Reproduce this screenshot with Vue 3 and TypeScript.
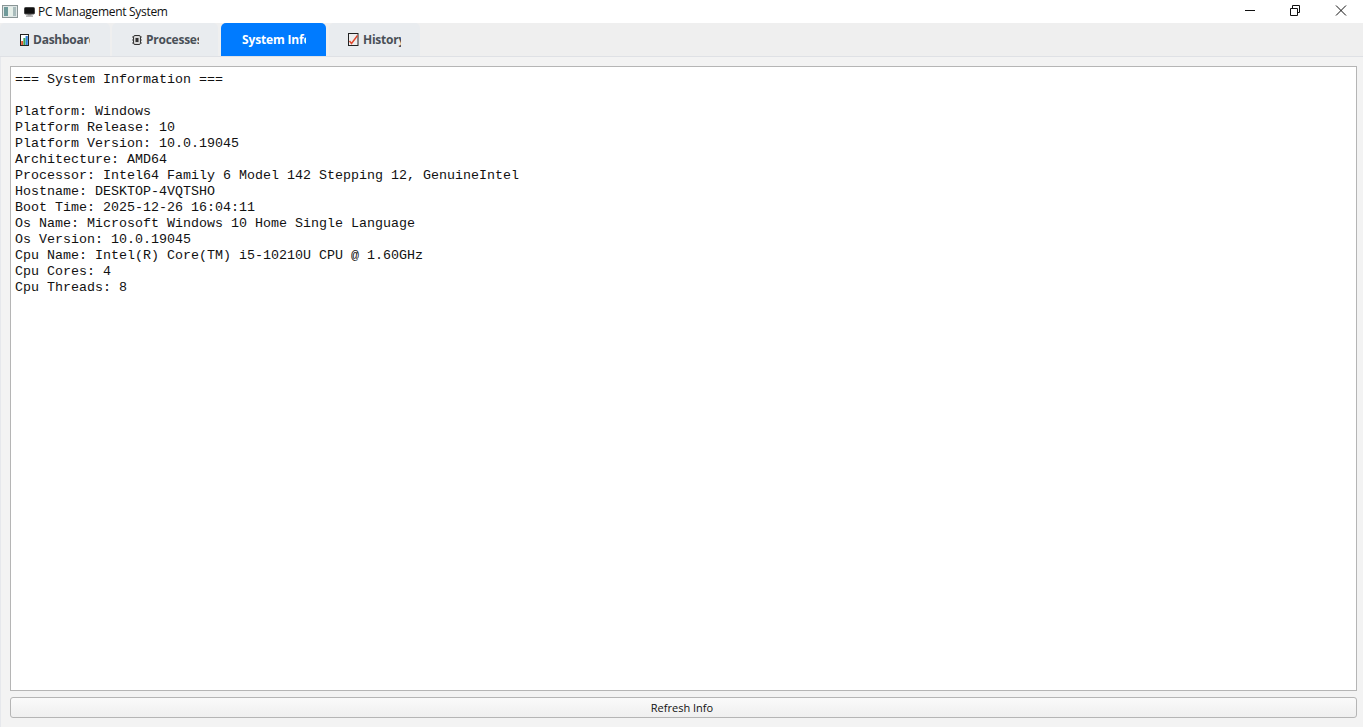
<script setup lang="ts">
const lines: string[] = [
  '=== System Information ===',
  '',
  'Platform: Windows',
  'Platform Release: 10',
  'Platform Version: 10.0.19045',
  'Architecture: AMD64',
  'Processor: Intel64 Family 6 Model 142 Stepping 12, GenuineIntel',
  'Hostname: DESKTOP-4VQTSHO',
  'Boot Time: 2025-12-26 16:04:11',
  'Os Name: Microsoft Windows 10 Home Single Language',
  'Os Version: 10.0.19045',
  'Cpu Name: Intel(R) Core(TM) i5-10210U CPU @ 1.60GHz',
  'Cpu Cores: 4',
  'Cpu Threads: 8',
]
const info = lines.join('\n')
</script>

<template>
  <div class="window">
    <header class="titlebar">
      <svg class="app-icon" width="16" height="14" viewBox="0 0 16 14">
        <rect x="0.5" y="0.5" width="15" height="12" fill="#dfe6e6" stroke="#8a9696" />
        <rect x="2" y="2" width="4" height="9" fill="#6f9a9a" />
        <rect x="6" y="2" width="5" height="9" fill="#e6efe9" />
        <rect x="11" y="2" width="3" height="9" fill="#a9bcbc" />
      </svg>
      <svg class="pc-icon" width="11" height="10" viewBox="0 0 11 10">
        <rect x="0.5" y="0.5" width="10" height="6.5" rx="1" fill="#111" stroke="#444" />
        <rect x="3.5" y="7" width="4" height="1.5" fill="#777" />
        <rect x="2" y="8.5" width="7" height="1.2" fill="#999" />
      </svg>
      <span class="title">PC Management System</span>
      <div class="controls">
        <svg class="ctl" width="46" height="23" viewBox="0 0 46 23">
          <path d="M20 10.5h10" stroke="#111" stroke-width="1" />
        </svg>
        <svg class="ctl" width="46" height="23" viewBox="0 0 46 23">
          <path d="M19.5 8.5h7v7h-7zM21.5 8.5v-3h7v7h-2" fill="none" stroke="#111" stroke-width="1" />
        </svg>
        <svg class="ctl" width="46" height="23" viewBox="0 0 46 23">
          <path d="M19 5.5l10 10M29 5.5l-10 10" stroke="#111" stroke-width="1" />
        </svg>
      </div>
    </header>

    <nav class="tabs">
      <div class="tab tab-dash">
        <svg width="9" height="12" viewBox="0 0 9 12">
          <rect x="0.5" y="0.5" width="8" height="11" fill="#fff" stroke="#222" />
          <rect x="1.2" y="7" width="2" height="4" fill="#e0522c" />
          <rect x="3.4" y="4" width="2" height="7" fill="#3aa655" />
          <rect x="5.6" y="2" width="2.2" height="9" fill="#2f7fd6" />
        </svg>
        <span class="label label-dash">Dashboard</span>
      </div>
      <div class="tab tab-proc">
        <svg width="10" height="12" viewBox="0 0 10 12">
          <rect x="1.5" y="1.5" width="7" height="9" rx="1.5" fill="#d8d8d8" stroke="#333" />
          <rect x="3.5" y="4" width="3" height="4" fill="#333" />
          <path d="M0 3h1.5M0 6h1.5M0 9h1.5M8.5 3h1.5M8.5 6h1.5M8.5 9h1.5" stroke="#555" stroke-width="1" />
        </svg>
        <span class="label label-proc">Processes</span>
      </div>
      <div class="tab tab-sys active">
        <span class="label label-sys">System Info</span>
      </div>
      <div class="tab tab-hist">
        <svg width="11" height="13" viewBox="0 0 11 13">
          <rect x="0.5" y="0.5" width="9.5" height="12" fill="#eeeeee" stroke="#222" />
          <path d="M1.5 8l2 2.5L9.5 2.5" stroke="#e0482c" stroke-width="1.4" fill="none" />
        </svg>
        <span class="label label-hist">History</span>
      </div>
    </nav>

    <main class="content">
      <pre class="output">{{ info }}</pre>
      <button class="refresh" type="button">Refresh Info</button>
    </main>
  </div>
</template>

<style>
html, body { margin: 0; background: #f3f3f3; overflow: hidden; }
</style>

<style scoped>
.window {
  width: 1363px;
  height: 727px;
  display: flex;
  flex-direction: column;
  background: #f3f3f3;
  box-sizing: border-box;
  font-family: "Open Sans", "Liberation Sans", sans-serif;
}
.titlebar {
  height: 23px;
  flex: none;
  background: #fff;
  display: flex;
  align-items: center;
  padding-left: 2px;
}
.app-icon { margin-right: 6px; }
.pc-icon { margin-right: 3px; margin-top: 1px; }
.title {
  font-size: 12px;
  color: #111;
  letter-spacing: -0.3px;
}
.controls { margin-left: auto; display: flex; }
.ctl { display: block; }
.tabs {
  height: 33px;
  flex: none;
  background: #efefef;
  display: flex;
  align-items: stretch;
  border-bottom: 1px solid #dfe1e5;
}
.tab {
  display: flex;
  align-items: center;
  gap: 4px;
  background: #e9ecef;
  border-radius: 5px 5px 0 0;
  box-sizing: border-box;
  overflow: hidden;
  color: #495057;
}
.tab-dash { width: 110px; padding-left: 20px; }
.tab-proc { width: 106px; margin-left: 2px; padding-left: 20px; }
.tab-sys { width: 105px; margin-left: 3px; padding-left: 21px; }
.tab-hist { width: 91px; margin-left: 3px; padding-left: 19px; }
.tab svg { flex: none; }
.active { background: #007bff; color: #fff; }
.label {
  display: block;
  overflow: hidden;
  white-space: nowrap;
  font-size: 12px;
  font-weight: 700;
  line-height: 16px;
  letter-spacing: -0.25px;
}
.label-dash { width: 57px; }
.label-proc { width: 53px; }
.label-sys { width: 64px; letter-spacing: -0.15px; }
.label-hist { width: 38px; }
.content {
  flex: 1;
  min-height: 0;
  display: flex;
  flex-direction: column;
  padding: 9px 6px 9px 9px;
  border-left: 1px solid #e6e8ec;
  box-sizing: border-box;
}
.output {
  flex: 1;
  min-height: 0;
  margin: 0;
  background: #fff;
  border: 1px solid #b5b5b5;
  padding: 5px 4px 3px;
  font-family: "Liberation Mono", monospace;
  font-size: 13.33px;
  line-height: 16px;
  color: #111;
  box-sizing: border-box;
  overflow: hidden;
}
.refresh {
  height: 21px;
  flex: none;
  margin-top: 6px;
  border: 1px solid #b5b5b5;
  border-radius: 3px;
  background: linear-gradient(#fafafa, #efefef);
  font-family: "Open Sans", "Liberation Sans", sans-serif;
  font-size: 11px;
  color: #111;
  padding: 0 3px 0 0;
}
</style>
